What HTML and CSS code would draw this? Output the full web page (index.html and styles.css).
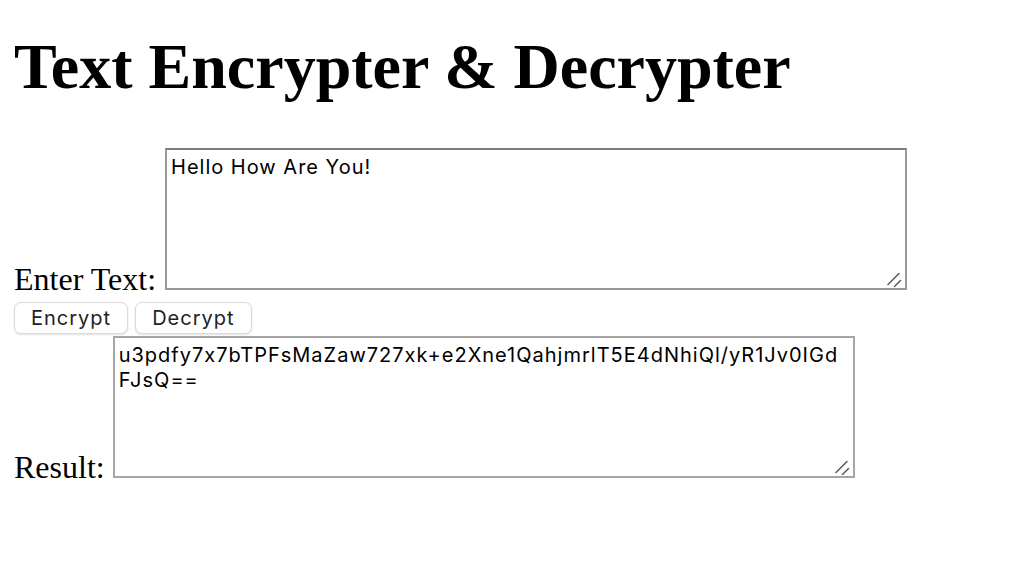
FILE: index.html
```html
<!DOCTYPE html>
<html lang="en">
<head>
<meta charset="utf-8">
<title>Text Encrypter &amp; Decrypter</title>
<link rel="stylesheet" href="styles.css">
</head>
<body>
<div class="page">
  <h1 class="title">Text Encrypter &amp; Decrypter</h1>
  <div class="row row-input">
    <label class="label" for="input">Enter Text:</label>
    <span class="field field-input">
      <textarea id="input" class="box box-input">Hello How Are You!</textarea>
      <svg class="grip" width="16" height="16" viewBox="0 0 16 16" aria-hidden="true"><path d="M2 12.5 L13 1.5 M8.5 14.5 L14.5 8.5" stroke="#5f5f5f" stroke-width="1.6" stroke-linecap="round" fill="none"/></svg>
    </span>
  </div>
  <div class="actions">
    <button class="btn" type="button">Encrypt</button>
    <button class="btn" type="button">Decrypt</button>
  </div>
  <div class="row row-result">
    <label class="label" for="result">Result:</label>
    <span class="field field-result">
      <textarea id="result" class="box box-result" readonly>u3pdfy7x7bTPFsMaZaw727xk+e2Xne1QahjmrlT5E4dNhiQl/yR1Jv0IGd
FJsQ==</textarea>
      <svg class="grip" width="16" height="16" viewBox="0 0 16 16" aria-hidden="true"><path d="M2 12.5 L13 1.5 M8.5 14.5 L14.5 8.5" stroke="#5f5f5f" stroke-width="1.6" stroke-linecap="round" fill="none"/></svg>
    </span>
  </div>
</div>
</body>
</html>
```
FILE: styles.css
```css
html, body {
  margin: 0;
  padding: 0;
  background: #fff;
}

.page {
  padding: 0 14px;
  font-family: "Liberation Serif", "Times New Roman", serif;
  color: #000;
}

.title {
  margin: 30px 0 0;
  font-size: 64px;
  line-height: 74px;
  font-weight: bold;
}

.row {
  font-size: 32px;
  line-height: 36px;
}

.row-input {
  margin-top: 44px;
}

.label {
  vertical-align: baseline;
}

.field {
  position: relative;
  display: inline-block;
  vertical-align: baseline;
  font-size: 0;
  line-height: 0;
}

.field-input {
  margin-left: 1px;
}

.grip {
  position: absolute;
  right: 5px;
  bottom: 2px;
  pointer-events: none;
}

.box {
  box-sizing: border-box;
  width: 742px;
  height: 142px;
  margin: 0;
  padding: 5px 4px;
  font-family: Inter, "Liberation Sans", sans-serif;
  font-feature-settings: "calt" 0;
  font-size: 20px;
  letter-spacing: 1px;
  line-height: 25px;
  color: #000;
  background: #fff;
  border: 2px solid #a6a6a6;
  border-radius: 0;
  vertical-align: baseline;
  resize: none;
  overflow: auto;
}

.box-input {
  border-color: #7b7b7b #9a9a9a #9a9a9a #9a9a9a;
}

.actions {
  margin-top: 5px;
  display: flex;
  gap: 7px;
}

.btn {
  box-sizing: border-box;
  height: 32px;
  padding: 0 16px;
  font-family: Inter, "Liberation Sans", sans-serif;
  font-feature-settings: "calt" 0;
  font-size: 20px;
  letter-spacing: 1px;
  color: #222;
  background: #fff;
  border: 1px solid #dadada;
  border-radius: 7px;
  box-shadow: 0 1px 2px rgba(0,0,0,0.12);
}

.row-result {
  margin-top: 2px;
}
```
